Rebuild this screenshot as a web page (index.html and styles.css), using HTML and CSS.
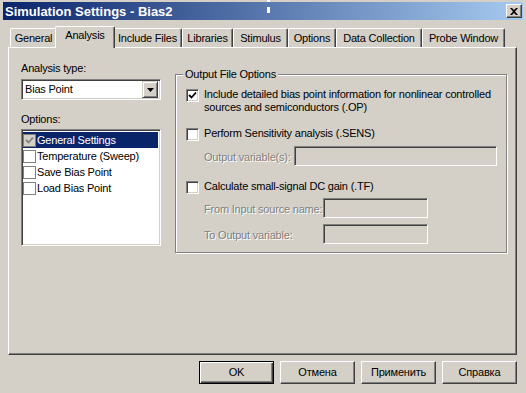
FILE: index.html
```html
<!DOCTYPE html>
<html>
<head>
<meta charset="utf-8">
<title>Simulation Settings - Bias2</title>
<link rel="stylesheet" href="styles.css">
</head>
<body>
<div class="window">
  <div class="titlebar">
    <span class="title">Simulation Settings - Bias2</span>
    <span class="close-btn"><svg width="8" height="7" viewBox="0 0 8 7"><path d="M0 0h2l2 2 2-2h2L5 3.5 8 7H6L4 5 2 7H0l3-3.5z" fill="#000"/></svg></span>
  </div>
  <div class="caret-mark"></div>
  <div class="dialog">
    <div class="tabs">
      <div class="tab tab-general">General</div>
      <div class="tab tab-analysis active">Analysis</div>
      <div class="tab tab-include">Include Files</div>
      <div class="tab tab-libraries">Libraries</div>
      <div class="tab tab-stimulus">Stimulus</div>
      <div class="tab tab-options">Options</div>
      <div class="tab tab-data">Data Collection</div>
      <div class="tab tab-probe">Probe Window</div>
    </div>
    <div class="panel">
      <div class="left-col">
        <div class="label">Analysis type:</div>
        <div class="combo sunken">
          <span class="combo-text">Bias Point</span>
          <span class="combo-btn"><svg width="7" height="4" viewBox="0 0 7 4"><path d="M0 0h7L3.5 4z" fill="#000"/></svg></span>
        </div>
        <div class="label label-options">Options:</div>
        <div class="listbox sunken">
          <div class="list-item selected"><span class="list-check checked"><svg width="9" height="9" viewBox="0 0 9 9"><path d="M1 4l2.5 2.5L8 1.5" stroke="#808080" stroke-width="1.8" fill="none"/></svg></span><span class="list-text">General Settings</span></div>
          <div class="list-item"><span class="list-check"></span><span class="list-text">Temperature (Sweep)</span></div>
          <div class="list-item"><span class="list-check"></span><span class="list-text">Save Bias Point</span></div>
          <div class="list-item"><span class="list-check"></span><span class="list-text">Load Bias Point</span></div>
        </div>
      </div>
      <div class="group">
        <span class="group-label">Output File Options</span>
        <div class="check-row row-op">
          <span class="checkbox sunken"><svg width="9" height="9" viewBox="0 0 9 9"><path d="M1 4l2.5 2.5L8 1.5" stroke="#000" stroke-width="1.8" fill="none"/></svg></span>
          <span class="check-text">Include detailed bias point information for nonlinear controlled<br>sources and semiconductors (.OP)</span>
        </div>
        <div class="check-row row-sens">
          <span class="checkbox sunken"></span>
          <span class="check-text">Perform Sensitivity analysis (.SENS)</span>
        </div>
        <div class="field-row row-outvar">
          <span class="field-label disabled lbl-outvar">Output variable(s):</span>
          <span class="field sunken field-outvar"></span>
        </div>
        <div class="check-row row-tf">
          <span class="checkbox sunken"></span>
          <span class="check-text">Calculate small-signal DC gain (.TF)</span>
        </div>
        <div class="field-row row-from">
          <span class="field-label disabled lbl-tf">From Input source name:</span>
          <span class="field sunken field-tf"></span>
        </div>
        <div class="field-row row-to">
          <span class="field-label disabled lbl-tf">To Output variable:</span>
          <span class="field sunken field-tf"></span>
        </div>
      </div>
    </div>
    <div class="buttons">
      <div class="btn btn-default">OK</div>
      <div class="btn">Отмена</div>
      <div class="btn">Применить</div>
      <div class="btn">Справка</div>
    </div>
  </div>
</div>
</body>
</html>
```
FILE: styles.css
```css
* { box-sizing: border-box; }
html, body { margin: 0; padding: 0; }
body {
  width: 526px;
  height: 393px;
  overflow: hidden;
  background: #d4d0c8;
  font-family: "Liberation Sans", Arial, sans-serif;
  font-size: 11px;
  line-height: 13px;
  letter-spacing: -0.2px;
  color: #000;
}
.window {
  position: relative;
  width: 526px;
  height: 393px;
  background: #d4d0c8;
  padding: 2px 3px 0 3px;
}
.titlebar {
  height: 18px;
  width: 520px;
  background: linear-gradient(to right, #0a246a, #a6caf0);
  display: flex;
  align-items: center;
  justify-content: space-between;
  padding: 0 1px 0 2px;
}
.title {
  color: #fff;
  font-weight: bold;
  font-size: 13px;
  letter-spacing: 0;
}
.close-btn {
  width: 16px;
  height: 14px;
  background: #d4d0c8;
  border: 1px solid;
  border-color: #fff #404040 #404040 #fff;
  box-shadow: inset -1px -1px 0 #808080;
  display: flex;
  align-items: center;
  justify-content: center;
}
.caret-mark {
  position: absolute;
  left: 267px;
  top: 0;
  width: 3px;
  height: 13px;
  background: linear-gradient(to bottom, #fff 0, #fff 2px, transparent 2px, transparent 7px, #fff 7px);
}
.dialog {
  padding: 0 0 0 5px;
}
.tabs {
  display: flex;
  align-items: flex-end;
  height: 22px;
  margin-top: 6px;
  padding-left: 2px;
  position: relative;
  z-index: 1;
}
.tab {
  height: 19px;
  border-left: 1px solid #fff;
  border-top: 1px solid #fff;
  border-right: 1px solid #404040;
  box-shadow: inset -1px 0 0 #808080;
  border-top-left-radius: 2px;
  border-top-right-radius: 2px;
  text-align: center;
  padding-top: 3px;
  white-space: nowrap;
  margin-bottom: 1px;
}
.tab.active {
  height: 22px;
  margin: 0 -2px 0 -2px;
  padding-top: 2px;
  background: #d4d0c8;
  position: relative;
  z-index: 2;
}
.tab-general { width: 47px; }
.tab-analysis { width: 60px; }
.tab-include { width: 69px; }
.tab-libraries { width: 51px; }
.tab-stimulus { width: 55px; }
.tab-options { width: 48px; }
.tab-data { width: 86px; }
.tab-probe { width: 83px; }
.panel {
  width: 509px;
  height: 308px;
  margin-top: -1px;
  border-left: 1px solid #fff;
  border-top: 1px solid #fff;
  border-right: 1px solid #404040;
  border-bottom: 1px solid #404040;
  box-shadow: inset -1px -1px 0 #808080;
  display: flex;
  align-items: flex-start;
  padding: 14px 0 0 12px;
}
.left-col {
  width: 140px;
  display: flex;
  flex-direction: column;
}
.label { height: 13px; white-space: nowrap; }
.sunken {
  border: 1px solid;
  border-color: #808080 #fff #fff #808080;
  box-shadow: inset 1px 1px 0 #404040, inset -1px -1px 0 #d4d0c8;
}
.combo {
  margin-top: 4px;
  height: 21px;
  width: 140px;
  background: #fff;
  display: flex;
  align-items: center;
  justify-content: space-between;
  padding: 2px 2px 2px 3px;
}
.combo-btn {
  width: 16px;
  height: 17px;
  background: #d4d0c8;
  border: 1px solid;
  border-color: #d4d0c8 #404040 #404040 #d4d0c8;
  box-shadow: inset 1px 1px 0 #fff, inset -1px -1px 0 #808080;
  display: flex;
  align-items: center;
  justify-content: center;
}
.label-options { margin-top: 13px; }
.listbox {
  margin-top: 3px;
  width: 140px;
  height: 117px;
  background: #fff;
  padding: 2px 2px 2px 1px;
}
.list-item {
  height: 16px;
  display: flex;
  align-items: center;
}
.list-item.selected {
  background: #0a246a;
  color: #fff;
}
.list-check {
  width: 13px;
  height: 13px;
  border: 1px solid #808080;
  background: #fff;
  margin-right: 1px;
  display: flex;
  align-items: center;
  justify-content: center;
}
.list-check.checked { background: #d4d0c8; }
.group {
  position: relative;
  margin-left: 14px;
  margin-top: 12px;
  width: 332px;
  height: 179px;
  border: 1px solid #808080;
  box-shadow: inset 1px 1px 0 #fff, 1px 1px 0 #fff;
  padding: 13px 9px 0 10px;
}
.group-label {
  position: absolute;
  left: 7px;
  top: -7px;
  padding: 0 2px;
  background: #d4d0c8;
  white-space: nowrap;
}
.check-row {
  display: flex;
  align-items: flex-start;
}
.checkbox {
  width: 13px;
  height: 13px;
  background: #fff;
  margin-top: 1px;
  margin-right: 5px;
  flex: none;
  display: flex;
  align-items: center;
  justify-content: center;
}
.check-text { white-space: nowrap; }
.row-sens { margin-top: 13px; }
.row-tf { margin-top: 14px; }
.field-row {
  display: flex;
  align-items: center;
  padding-left: 18px;
}
.row-outvar { margin-top: 5px; }
.row-from { margin-top: 4px; }
.row-to { margin-top: 6px; }
.disabled {
  color: #808080;
  text-shadow: 1px 1px 0 #fff;
}
.field-label { white-space: nowrap; flex: none; padding-top: 2px; }
.lbl-outvar { width: 90px; }
.lbl-tf { width: 119px; }
.field {
  height: 20px;
  background: #d4d0c8;
  flex: none;
}
.field-outvar { width: 203px; }
.field-tf { width: 105px; }
.buttons {
  display: flex;
  justify-content: flex-end;
  gap: 6px;
  margin-top: 6px;
  width: 509px;
}
.btn {
  width: 75px;
  height: 23px;
  border: 1px solid;
  border-color: #fff #404040 #404040 #fff;
  box-shadow: inset -1px -1px 0 #808080;
  display: flex;
  align-items: center;
  justify-content: center;
}
.btn-default {
  border-color: #000;
  box-shadow: inset 1px 1px 0 #fff, inset -1px -1px 0 #404040, inset -2px -2px 0 #808080;
}
```
